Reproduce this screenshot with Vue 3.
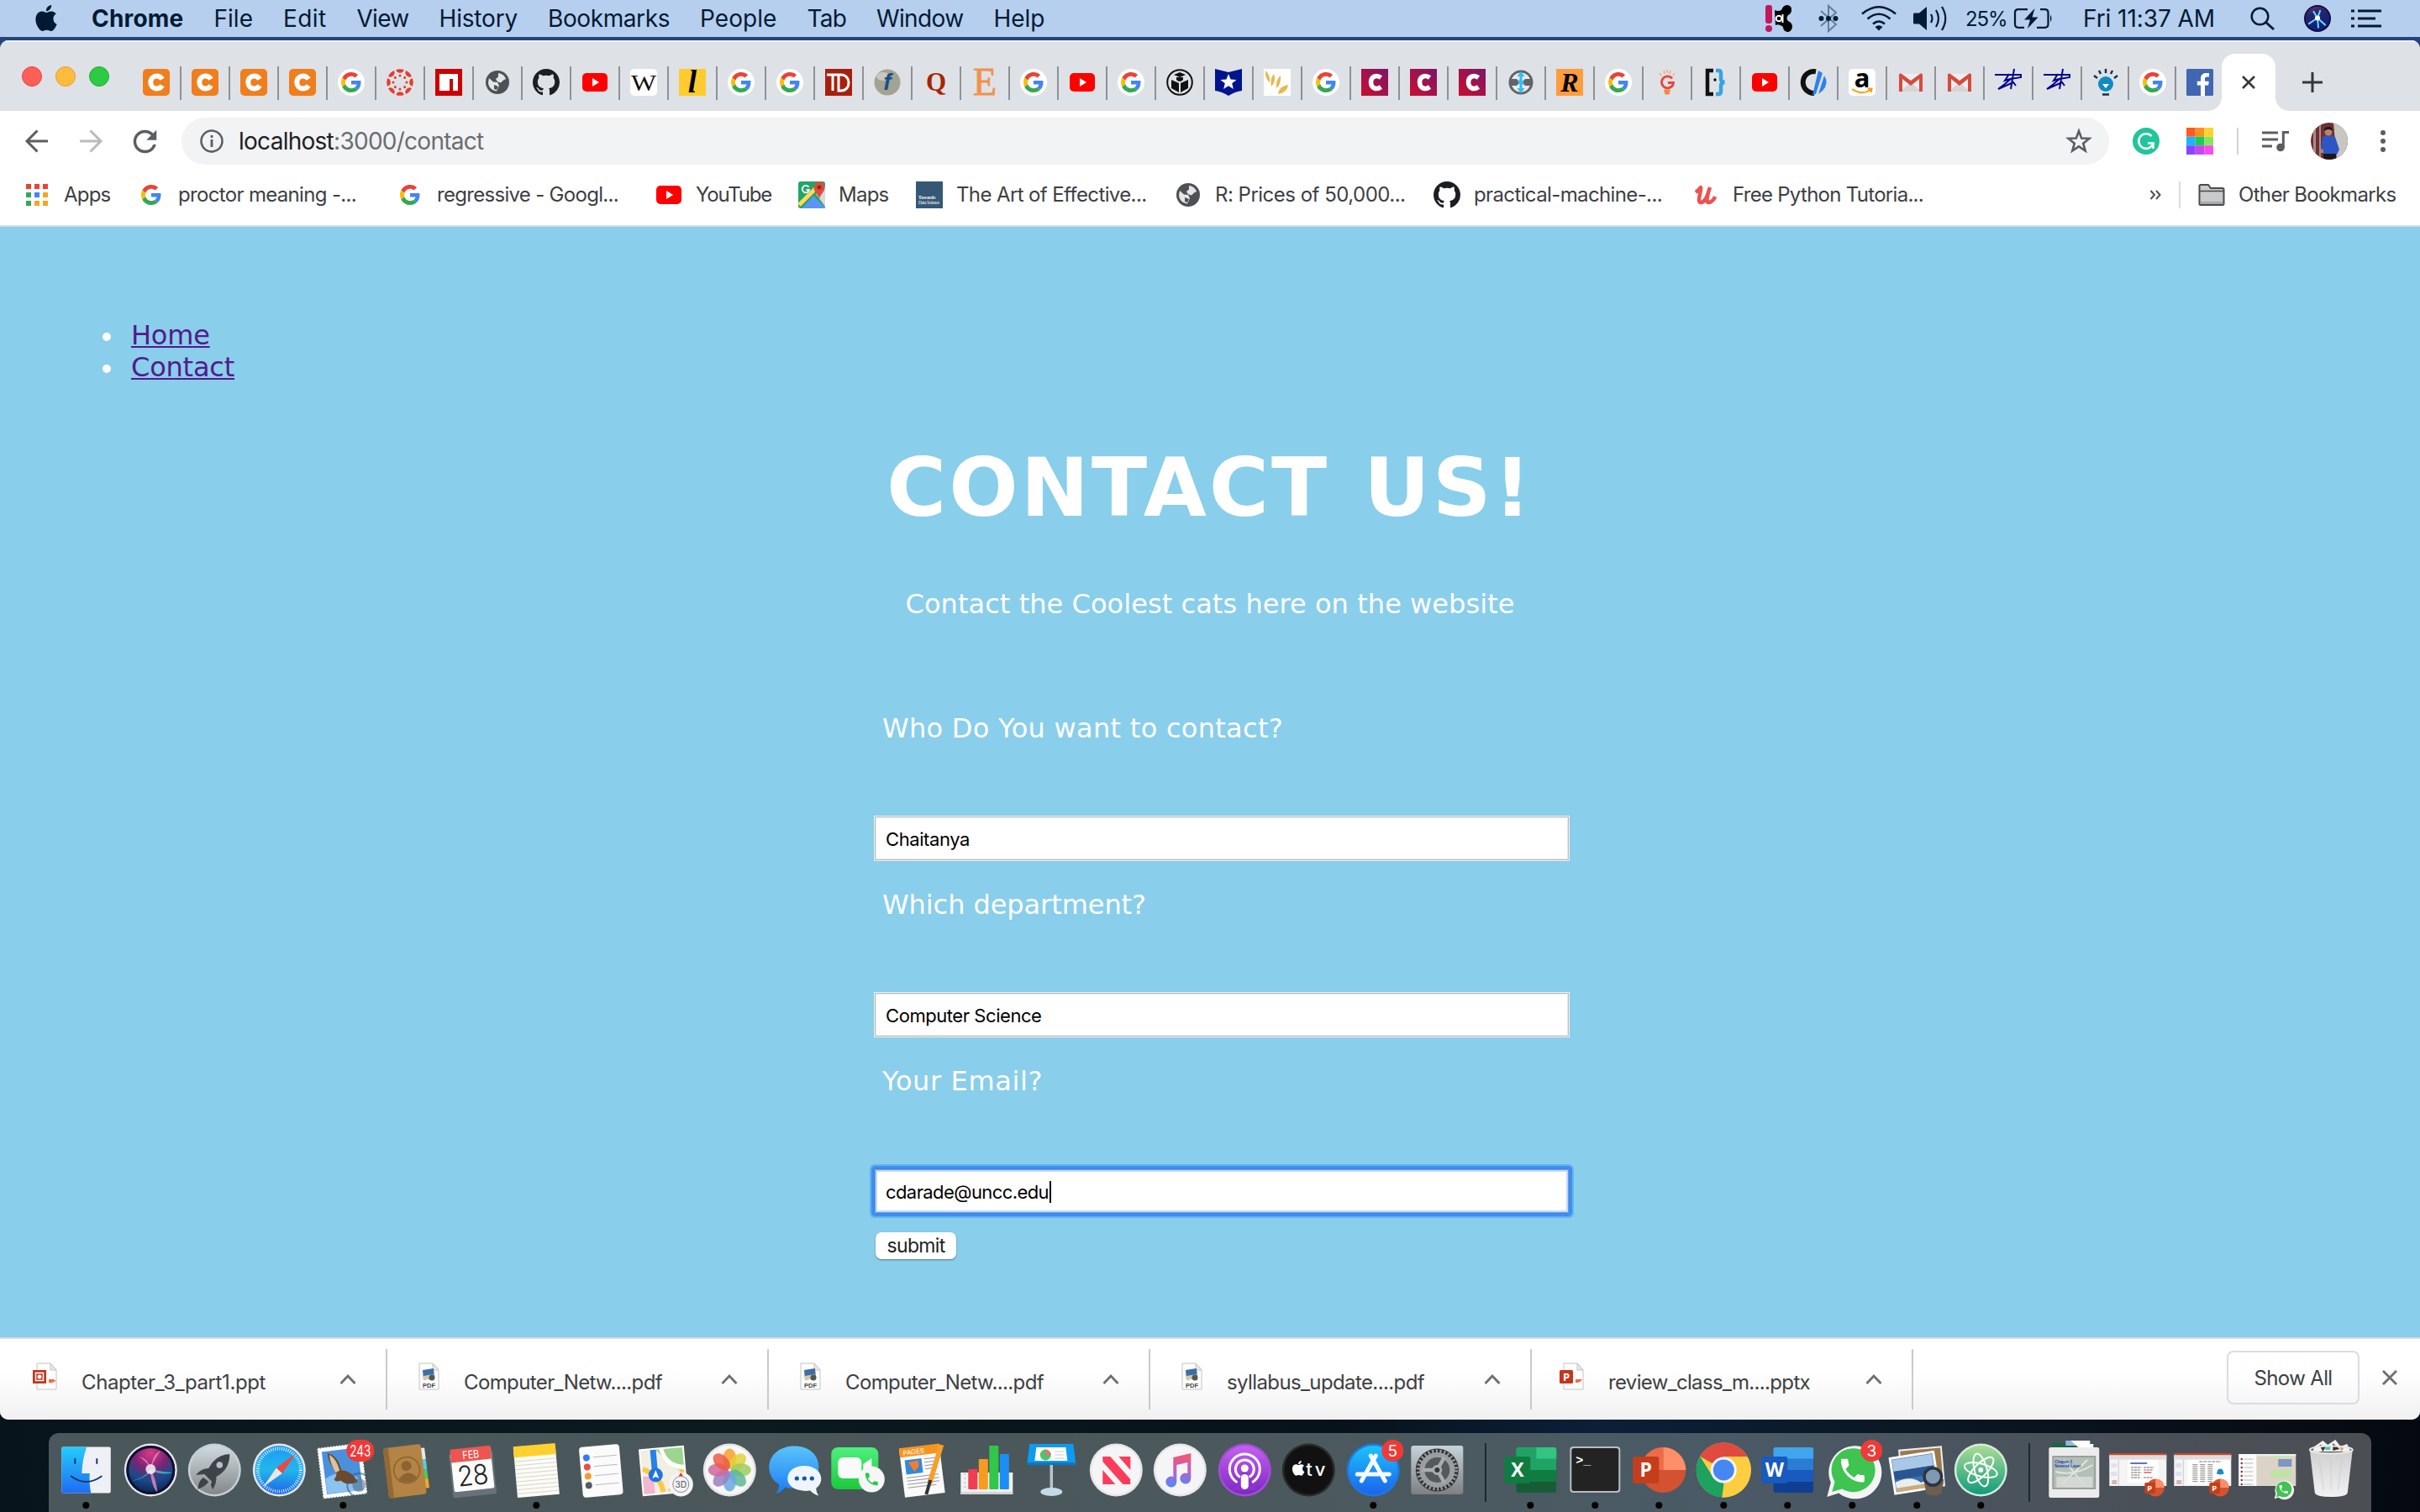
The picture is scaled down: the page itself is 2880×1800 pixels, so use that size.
<script setup>
// Stretches or tightens letter-spacing so a label occupies the given width
const vFit = {
  mounted(el, { value }) {
    const natural = el.getBoundingClientRect().width
    el.style.letterSpacing = (value - natural) / el.textContent.length + 'px'
  }
}

const menus = [
  ['Chrome', 109.5], ['File', 46.5], ['Edit', 51.5], ['View', 62], ['History', 93.5], ['Bookmarks', 145],
  ['People', 91.5], ['Tab', 46.5], ['Window', 103.5], ['Help', 61]
]

const gPaths = '<path fill="#ea4335" d="M24 9.500c3.540 0 6.710 1.220 9.210 3.600l6.850-6.850C35.900 2.380 30.470 0 24 0 14.620 0 6.510 5.380 2.560 13.220l7.980 6.190C12.430 13.720 17.740 9.500 24 9.500z"/><path fill="#4285f4" d="M46.980 24.550c0-1.570-.150-3.090-.380-4.550H24v9.020h12.940c-.580 2.960-2.260 5.480-4.780 7.180l7.730 6c4.510-4.180 7.090-10.360 7.090-17.650z"/><path fill="#fbbc05" d="M10.530 28.590c-.480-1.450-.760-2.990-.760-4.590s.270-3.140.760-4.590l-7.980-6.190C.920 16.460 0 20.120 0 24c0 3.880.920 7.540 2.560 10.780l7.970-6.190z"/><path fill="#34a853" d="M24 48c6.480 0 11.930-2.130 15.890-5.810l-7.730-6c-2.150 1.450-4.920 2.300-8.160 2.300-6.260 0-11.570-4.220-13.470-9.910l-7.980 6.190C6.510 42.620 14.620 48 24 48z"/>'
const github = '<path transform="scale(2)" fill="#1b1f23" d="M8 0C3.58 0 0 3.58 0 8c0 3.54 2.29 6.53 5.47 7.59.4.07.55-.17.55-.38 0-.19-.01-.82-.01-1.49-2.01.37-2.53-.49-2.69-.94-.09-.23-.48-.94-.82-1.13-.28-.15-.68-.52-.01-.53.63-.01 1.08.58 1.23.82.72 1.21 1.87.87 2.33.66.07-.52.28-.87.51-1.07-1.78-.2-3.64-.89-3.64-3.95 0-.87.31-1.59.82-2.15-.08-.2-.36-1.02.08-2.12 0 0 .67-.21 2.2.82.64-.18 1.32-.27 2-.27s1.36.09 2 .27c1.53-1.04 2.2-.82 2.2-.82.44 1.1.16 1.92.08 2.12.51.56.82 1.27.82 2.15 0 3.07-1.87 3.75-3.65 3.95.29.25.54.73.54 1.48 0 1.07-.01 1.93-.01 2.2 0 .21.15.46.55.38A8.01 8.01 0 0 0 16 8c0-4.42-3.58-8-8-8z"/>'
const phone = 'M6.62 10.79c1.44 2.83 3.76 5.14 6.59 6.59l2.2-2.2c.27-.27.67-.36 1.02-.24 1.12.37 2.33.57 3.57.57.55 0 1 .45 1 1V20c0 .55-.45 1-1 1-9.39 0-17-7.61-17-17 0-.55.45-1 1-1h3.500c.55 0 1 .45 1 1 0 1.25.2 2.45.57 3.57.11.35.03.74-.25 1.020z'
const apple = 'M12.152 6.896c-.948 0-2.415-1.078-3.96-1.04-2.04.027-3.91 1.183-4.961 3.014-2.117 3.675-.546 9.103 1.519 12.09 1.013 1.454 2.208 3.09 3.792 3.039 1.52-.065 2.09-.987 3.935-.987 1.831 0 2.35.987 3.96.948 1.637-.026 2.676-1.48 3.676-2.948 1.156-1.688 1.636-3.325 1.662-3.415-.039-.013-3.182-1.221-3.22-4.857-.026-3.04 2.48-4.494 2.597-4.559-1.429-2.09-3.623-2.324-4.39-2.376-2-.156-3.675 1.09-4.61 1.09zM15.53 3.83c.843-1.012 1.4-2.427 1.245-3.83-1.207.052-2.662.805-3.532 1.818-.78.896-1.454 2.338-1.273 3.714 1.338.104 2.715-.688 3.559-1.701'
const range = (n) => Array.from({ length: n }, (_, i) => i)

const fav = {
  chegg: '<rect width="32" height="32" rx="5" fill="#f07e1d"/><path d="M24.500 12.200A7.500 7.500 0 0 0 18 8.500c-4 0-7.200 3-7.200 7.500s3.200 7.500 7.200 7.500a7.500 7.500 0 0 0 6.500-3.700" transform="translate(-1.500 0)" fill="none" stroke="#fff" stroke-width="6"/>',
  google: `<circle cx="16" cy="16" r="16" fill="#fff"/><g transform="translate(4 4) scale(.5)">${gPaths}</g>`,
  gplain: `<g transform="translate(4 4) scale(.5)">${gPaths}</g>`,
  canvas: '<g fill="#e03e2d">' + range(8).map(i => `<g transform="rotate(${i * 45} 16 16)"><path d="M11.300 1q4.700-1.700 9.400 0a4.800 4.800 0 0 1-9.400 0"/><circle cx="16" cy="8" r="1.500"/></g>`).join('') + '</g>',
  npm: '<rect width="32" height="32" fill="#cb0000"/><path fill="#fff" d="M5 6h22v20h-6V12h-4v14H5z"/>',
  globe: '<circle cx="16" cy="16" r="14" fill="#4d5156"/><path fill="#fff" fill-opacity=".85" d="M17 5c4 .400 8 3.500 9 7l-3 1.500-3 3-4-1.200-2-3.300 3-2.500zM6 11l5 4.500 5 .5 2 4-3 6.500C9 26 5 21 5 16z"/><path fill="#4d5156" d="m12 19 5 2-2 4-3-1z"/>',
  github,
  youtube: '<rect x="1" y="5" width="30" height="22" rx="5" fill="#f00"/><path fill="#fff" d="M13 11v10l8-5z"/>',
  wiki: '<rect width="32" height="32" rx="5" fill="#fff"/><text x="16" y="26" font-size="28" text-anchor="middle" textLength="30" lengthAdjust="spacingAndGlyphs" font-family="Liberation Serif, serif" fill="#111">W</text>',
  ell: '<rect width="32" height="32" fill="#ffcb2f"/><text x="16" y="28" font-size="37" font-weight="bold" font-style="italic" text-anchor="middle" font-family="Liberation Serif, serif">l</text>',
  td: '<rect width="32" height="32" fill="#a8200d"/><path fill="none" stroke="#fff" stroke-width="3" d="M2 7h17c12 0 12 19 0 19h-3V7M9 7v19"/>',
  fsharp: '<circle cx="16" cy="16" r="15.500" fill="#a4a393"/><ellipse cx="11" cy="9" rx="8" ry="5" fill="#c9c8bb"/><text x="16" y="25" font-size="28" font-weight="bold" font-style="italic" text-anchor="middle" font-family="Liberation Sans, sans-serif" fill="#14508c">f</text>',
  quora: '<text x="16" y="26" font-size="31" font-weight="bold" text-anchor="middle" font-family="Liberation Serif, serif" fill="#a82400">Q</text>',
  etsy: '<text x="16" y="31" font-size="46" text-anchor="middle" font-family="Liberation Serif, serif" fill="#f0924e" stroke="#f0924e" stroke-width=".8">E</text>',
  book: '<circle cx="16" cy="16" r="14.800" fill="none" stroke="#111" stroke-width="2"/><path fill="#111" d="m6 13 9 4v11l-9-5zM26 13l-9 4v11l9-5zM9 7l7-3 7 3-7 3zM12 10h8v3q-4 4-8 0z"/>',
  badge: '<path fill="#00148c" d="m0 0 16 4L32 0v26q-8 1-16 6-8-5-16-6z"/><path fill="#fff" d="m16 6 2.600 6.500 6.900.4-5.300 4.400 1.700 6.700-5.900-3.700-5.900 3.700 1.700-6.700-5.300-4.400 6.900-.4z"/>',
  leaf: '<rect width="32" height="32" fill="#fff"/><g fill="#e8b84a"><path d="M2 2q6 6 5 14-6-5-5-14M12 6q3 8-3 15-2-9 3-15M20 8q1 10-5 15-1-10 5-15M29 19q-1 9-12 11 1-9 12-11"/></g>',
  crimson: '<linearGradient id="cr" x1="0" y1="1" x2="1" y2="0"><stop stop-color="#c8102e"/><stop offset="1" stop-color="#7d1568"/></linearGradient><rect width="32" height="32" fill="url(#cr)"/><path d="M23.500 10.500C18 6.500 11.500 9 11.500 16s6.500 9.500 12 5.500" fill="none" stroke="#fff" stroke-width="5.500"/>',
  compass: '<circle cx="16" cy="16" r="13" fill="#e8eaed" stroke="#616569" stroke-width="3"/><path fill="#616569" d="M3 12h8l4 4-4 4H3zM29 12h-8l-4 4 4 4h8z"/><path fill="#2fc0f5" d="m16 3 4.500 6h-3v4.500L20 17l-2.500 2v4h3L16 29l-4.500-6h3v-4.500L12 15l2.500-2V9h-3z"/>',
  r: '<rect width="32" height="32" fill="#ff9c3c"/><text x="16" y="27" font-size="32" font-weight="bold" font-style="italic" text-anchor="middle" font-family="Liberation Serif, serif">R</text>',
  gbulb: '<path d="M7 5l2 3M12 2l1 4M16 1v4M20 2l-1 4M25 5l-2 3" stroke="#f0a35c" stroke-width="1.200"/><path d="M22 11.500a7 7 0 1 0 1.500 5H17" fill="none" stroke="#e8453c" stroke-width="2.800"/><path d="M12 24.500h8l-1.500 6h-5z" fill="#f08a3c"/>',
  braces: '<path d="M13 2H6v28h7" fill="none" stroke="#111" stroke-width="4.500"/><path d="M16 2h3q3 0 3 3v7q0 3 4 4-4 1-4 4v7q0 3-3 3h-3" fill="none" stroke="#35a4df" stroke-width="4.500"/><circle cx="15" cy="13" r="1.700"/>',
  cd: '<path d="M19 3.200A13 13 0 1 0 17 29" fill="none" stroke="#111" stroke-width="6"/><path fill="#2f80ed" d="M22 2l5 3-8 25-4 1zM29 8q6 9-2 18l-5 4z"/>',
  amazon: '<rect width="32" height="32" rx="5" fill="#fff"/><text x="16" y="22" font-size="31" font-weight="bold" text-anchor="middle" font-family="Noto Sans, sans-serif">a</text><path d="M4 24q12 8 22 1M23 23.500l4.500.2-1 4.300" fill="none" stroke="#f90" stroke-width="2"/>',
  gmail: '<path fill="#eee" d="M3 6h26v21H3z"/><path fill="#d5d5d5" d="m3 27 13-11 13 11z"/><path fill="#d54b3d" d="M2 27V7q0-2 2.500-1.500L16 14l11.500-8.500Q30 5 30 7v20h-4V12l-10 8L6 12v15z"/>',
  scrawl: '<path d="M0 7h31v3l-12 2M23 0l-4 24M17 6l-5 8 6-2M20 11l-8 7-8 6 18-8 3 4" fill="none" stroke="#04048c" stroke-width="2"/>',
  idea: '<circle cx="16" cy="18" r="9" fill="#0f8bc4"/><path fill="#fff" d="M12 18h8l-4 5z"/><path d="M16 0v5M8 2l2 4M24 2l-2 4M2 8l4 3M30 8l-4 3M12 30.500h8" stroke="#14304a" stroke-width="2.400"/>',
  facebook: '<rect width="32" height="32" rx="1.500" fill="#4267b2"/><path fill="#fff" d="M22 32V19.600h4.200l.6-4.800H22v-3c0-1.400.4-2.400 2.400-2.400H27V5.100C26.500 5 25 4.900 23.300 4.900c-3.700 0-6.300 2.300-6.300 6.400v3.500h-4.200v4.800H17V32z"/>',
  apps: range(9).map(i => `<rect x="${3 + (i % 3) * 10}" y="${3 + Math.floor(i / 3) * 10}" width="6" height="6" fill="${['#ea4335', '#ea4335', '#ea4335', '#34a853', '#4285f4', '#f5a623', '#34a853', '#f5a623', '#f5a623'][i]}"/>`).join(''),
  maps: '<rect width="32" height="32" rx="3" fill="#23a566"/><path fill="#5b95f5" d="M4 32 18 17l14 14v1z"/><path fill="#d8dade" d="m21 15 11-9v24z"/><path d="M1 28 21 8" stroke="#ffd85c" stroke-width="5"/><path d="M12.500 6.800a4.200 4.200 0 1 0 .6 3.200H9.500" fill="none" stroke="#fff" stroke-width="1.800"/><path fill="#e04a3f" d="M25 21c-1-6-6.500-8-6.500-14a6.500 6.500 0 0 1 13 0c0 6-5.500 8-6.500 14"/><circle cx="25" cy="7" r="2.500" fill="#8c2a22"/>',
  tds: '<rect width="32" height="32" fill="#355876"/><text x="3" y="21" font-size="5.500" font-weight="bold" font-family="Liberation Serif, serif" fill="#fff">Towards</text><text x="3" y="27" font-size="5.500" textLength="25" font-family="Liberation Serif, serif" fill="#fff">Data Science</text>',
  udemy: '<path d="M4 13q4-3 6-6c1 4-5 18 0 18 5 0 8-8 9-12-1 5-3 12 0 12 4 0 7-4 8-7M19 13l2-6" fill="none" stroke="#ec5252" stroke-width="4.500" stroke-linejoin="round"/>'
}

const tabs = ['chegg', 'chegg', 'chegg', 'chegg', 'google', 'canvas', 'npm', 'globe', 'github', 'youtube', 'wiki', 'ell', 'google', 'google',
  'td', 'fsharp', 'quora', 'etsy', 'google', 'youtube', 'google', 'book', 'badge', 'leaf', 'google', 'crimson', 'crimson', 'crimson',
  'compass', 'r', 'google', 'gbulb', 'braces', 'youtube', 'cd', 'amazon', 'gmail', 'gmail', 'scrawl', 'scrawl', 'idea', 'google', 'facebook']

const bookmarks = [
  { icon: 'apps', text: 'Apps', slot: 56, fit: 55.5 },
  { icon: 'gplain', text: 'proctor meaning -...', slot: 228, fit: 212 },
  { icon: 'gplain', text: 'regressive - Googl...', slot: 228, fit: 216 },
  { icon: 'youtube', text: 'YouTube', slot: 90, fit: 90 },
  { icon: 'maps', text: 'Maps', slot: 60, fit: 59.5 },
  { icon: 'tds', text: 'The Art of Effective...', slot: 228, fit: 226.5 },
  { icon: 'globe', text: 'R: Prices of 50,000...', slot: 228, fit: 226.5 },
  { icon: 'github', text: 'practical-machine-...', slot: 228, fit: 224 },
  { icon: 'udemy', text: 'Free Python Tutoria...', slot: 228, fit: 227 }
]

const sheet = '<path fill="#fdfdfd" stroke="#c4c4c4" d="M6 1h16l7 8v23H6z"/><path fill="#e9e9e9" stroke="#c4c4c4" d="M22 1v8h7z"/>'
const fileIcon = {
  ppt: sheet + '<path fill="#f28b6e" d="M20 11v10h9a8 8 0 0 1-9 3z"/><rect x="1" y="9" width="16" height="16" fill="#c5351d"/><path d="M4.500 12.500h9v9h-9z" fill="none" stroke="#fff" stroke-width="1.500"/><circle cx="9" cy="17" r="2.500" fill="#fff"/><path fill="#ef6b4c" d="M20 11v9h7a8 8 0 0 1-7 4z"/>',
  pdf: sheet + '<path fill="#3d6ea8" d="m10 9 13-2 1 11-13 3z"/><path fill="#d9c9a4" d="m11 16 12-2 1 4-13 3z"/><circle cx="21" cy="18" r="3.500" fill="#555"/><text x="17.500" y="29.500" font-size="7.500" font-weight="bold" text-anchor="middle" font-family="Liberation Sans, sans-serif" fill="#444">PDF</text>',
  pptx: sheet + '<path fill="#ef6b4c" d="M20 11v9h8a8 8 0 0 1-8 4z"/><rect x="1" y="9" width="16" height="16" rx="1.500" fill="#c5351d"/><text x="9" y="21.500" font-size="13" font-weight="bold" text-anchor="middle" font-family="Open Sans, sans-serif" fill="#fff">P</text>'
}
const downloads = [
  { icon: 'ppt', text: 'Chapter_3_part1.ppt', fit: 219 },
  { icon: 'pdf', text: 'Computer_Netw....pdf', fit: 236 },
  { icon: 'pdf', text: 'Computer_Netw....pdf', fit: 236 },
  { icon: 'pdf', text: 'syllabus_update....pdf', fit: 235 },
  { icon: 'pptx', text: 'review_class_m....pptx', fit: 240 }
]

const fields = [
  { label: 'Who Do You want to contact?', fit: 477, value: 'Chaitanya', vfit: 100 },
  { label: 'Which department?', fit: 314, value: 'Computer Science', vfit: 185.5 },
  { label: 'Your Email?', fit: 191, value: 'cdarade@uncc.edu', vfit: 194, focus: true }
]

const disc = (fill, ring = '#e6e6ea') => `<circle cx="38" cy="44" r="31.500" fill="${ring}"/><circle cx="38" cy="44" r="29" fill="${fill}"/>`
const badgeOf = (t) => `<rect x="${t.length > 1 ? 42 : 48}" y="8" width="${t.length > 1 ? 33 : 26}" height="26" rx="13" fill="#f03a37"/><text x="${t.length > 1 ? 58.5 : 61}" y="27.500" font-size="19" text-anchor="middle"${t.length > 1 ? ' textLength="25" lengthAdjust="spacingAndGlyphs"' : ''} font-family="Inter, sans-serif" fill="#fff">${t}</text>`
const office = (c1, c2, c3, c4, tile, letter) => `<clipPath id="of${letter}"><rect x="21" y="17" width="48" height="54" rx="3"/></clipPath><g clip-path="url(#of${letter})"><rect x="21" y="17" width="48" height="54" fill="${c4}"/><rect x="21" y="17" width="48" height="41" fill="${c3}"/><rect x="21" y="17" width="48" height="27" fill="${c2}"/><rect x="21" y="17" width="48" height="13.500" fill="${c1}"/></g><rect x="7" y="28" width="31" height="32" rx="2.500" fill="${tile}"/><text x="22.500" y="52" font-size="23" font-weight="bold" text-anchor="middle" font-family="Open Sans, sans-serif" fill="#fff">${letter}</text>`
const pptMini = '<circle cx="46" cy="65" r="10.500" fill="#d35230"/><path fill="#ff8f6b" d="M46 65V54.500A10.500 10.500 0 0 1 56.500 65z"/><rect x="33" y="59" width="12.500" height="13" rx="1.500" fill="#c43e1c"/><text x="39" y="69" font-size="9.500" font-weight="bold" text-anchor="middle" font-family="Open Sans, sans-serif" fill="#fff">P</text>'
const slideMini = '<rect x="4" y="25" width="68" height="38" fill="#f4f4f4"/><rect x="4" y="24" width="68" height="2.500" fill="#c8472b"/><rect x="4" y="26.500" width="68" height="5" fill="#ddd"/><path d="M15 32v31" stroke="#ccc"/><rect x="6" y="36" width="7" height="5" fill="#dfe0f0"/><rect x="6" y="46" width="7" height="5" fill="#dfe0f0"/><rect x="7" y="56" width="6" height="5" fill="#d8b4b8"/>'
const wa = '<path fill="#f4f4f4" d="M8 76l4.500-17A31.500 31.500 0 1 1 22 71.500z"/><path fill="#3fc351" d="M14 70l3.300-12A26 26 0 1 1 26 66.500z"/>'
const glyphSiri = '<path fill="#2fd3d6" fill-opacity=".75" d="M38 43q-6 10-23 14 15-2 24-12 14 6 25 2-14-1-26-4"/><path fill="#f08ac0" fill-opacity=".8" d="M38 43q7 14 8 27-6-3-9-27M38 43Q35 30 24 28q10 6 14 15M38 43q2-18 12-22-8 10-12 22"/><circle cx="38" cy="43" r="6" fill="#fff" fill-opacity=".8"/>'
const menuSiri = '<linearGradient id="ms" x1="0" y1="0" x2=".3" y2="1"><stop stop-color="#7a2a86"/><stop offset=".35" stop-color="#28246c"/><stop offset="1" stop-color="#101c86"/></linearGradient><circle cx="38" cy="44" r="31.500" fill="#0b1030"/><circle cx="38" cy="44" r="28" fill="url(#ms)"/><path d="M38 43 18 56M38 43l18 16M38 43l-9-15M38 43l6-17M38 43l2 22" stroke="#5fdcf0" stroke-width="4" stroke-linecap="round"/><circle cx="38" cy="43" r="6" fill="#fff"/>'

const dock = {
  finder: '<linearGradient id="fi" x1="0" y1="0" x2="0" y2="1"><stop stop-color="#25cbfb"/><stop offset="1" stop-color="#1f6cf2"/></linearGradient><rect x="9" y="16.500" width="58.500" height="55" rx="2" fill="#eef0f6"/><path fill="url(#fi)" d="M11 16.500h28q-5.500 15-6 31.500h9.500q-1 12 1.500 23.500H11a2 2 0 0 1-2-2v-51a2 2 0 0 1 2-2"/><path d="M20.500 51.500q17.500 13 36 0M25 31v5M51 31v5" fill="none" stroke="#173a63" stroke-width="2" stroke-linecap="round"/>',
  siri: '<radialGradient id="si" cx=".5" cy=".15" r=".95"><stop stop-color="#d93a86"/><stop offset=".35" stop-color="#7c2473"/><stop offset=".6" stop-color="#1a4a8c"/><stop offset="1" stop-color="#0a1230"/></radialGradient>' + disc('url(#si)') + '<circle cx="38" cy="44" r="27.500" fill="none" stroke="#0d1130" stroke-width="3"/>' + glyphSiri,
  rocket: '<linearGradient id="ro" x1="0" y1="0" x2="0" y2="1"><stop stop-color="#cfdbe0"/><stop offset="1" stop-color="#84878a"/></linearGradient>' + disc('url(#ro)', '#c5cfd4') + '<path fill="#3e4347" d="M56 25q-17 1-25 17-9 0-15 8l10-1 9 9q-3 4 1 9 5-8 4-15Q56 44 56 25M25 53q-6 3-7 14 10-4 13-9z"/><circle cx="44" cy="38" r="3.800" fill="#b7c0c5"/>',
  safari: '<linearGradient id="sa" x1="0" y1="0" x2="0" y2="1"><stop stop-color="#1f9bf5"/><stop offset=".5" stop-color="#22b6ea"/><stop offset="1" stop-color="#1d63e8"/></linearGradient>' + disc('url(#sa)') + '<circle cx="38" cy="44" r="25.500" fill="none" stroke="#e8f5ff" stroke-width="4" stroke-dasharray=".9 1.700"/><path fill="#f0473e" d="m58 24-16.500 24-7-6.500z"/><path fill="#e8e8e8" d="m19 64 15.500-22.500 7 6.500z"/>',
  mail: '<g transform="rotate(-7 38 45)"><rect x="13" y="17" width="48" height="56" fill="#4a90dd" stroke="#fff" stroke-width="5"/><rect x="10.500" y="14.500" width="53" height="61" fill="none" stroke="#4c585b" stroke-width="1.500" stroke-dasharray="1.500 2"/><path fill="#8ac2f0" d="M16 52q20-12 42 6v12H16z"/><path fill="#6d4a2a" d="M22 22q12 4 14 22 12 2 18 16-14 4-20-4-6 2-8-2 4-4 4-8-8-10-8-24"/><path fill="#d9c3a0" d="M24 24q8 6 10 20l-5 2q-5-10-5-22"/></g><circle cx="57" cy="62" r="14" fill="none" stroke="#3c5873" stroke-opacity=".6" stroke-width="2"/><circle cx="57" cy="62" r="8" fill="#3c5873" fill-opacity=".5"/>' + badgeOf('243'),
  contacts: '<g transform="rotate(-7 38 45)"><path fill="#e8e8e8" d="M55 20h6v14h-6z"/><path fill="#5cc8e8" d="M55 34h6v12h-6z"/><path fill="#4cca5c" d="M55 46h6v11h-6z"/><path fill="#f5a82c" d="M55 57h6v11h-6z"/><rect x="12" y="15" width="45" height="60" rx="3" fill="#b38444"/><path fill="#946a34" d="M12 18a3 3 0 0 1 3-3h3v60h-3a3 3 0 0 1-3-3z"/><circle cx="37" cy="44" r="15.500" fill="none" stroke="#8b6430" stroke-width="1.500"/><circle cx="37" cy="39" r="6" fill="#8b6430"/><path fill="#8b6430" d="M26 54q11-13 22 0-10 9-22 0"/></g>',
  calendar: '<g transform="rotate(-6 38 45)"><rect x="12" y="22" width="52" height="53" rx="2" fill="#69727a"/><rect x="14" y="18" width="48" height="50" rx="2" fill="#fbfbfb"/><path fill="#ec5550" d="M14 33V17h48v16z"/><text x="38" y="30" font-size="13" text-anchor="middle" textLength="20" lengthAdjust="spacingAndGlyphs" font-family="Inter, sans-serif" fill="#fff">FEB</text><text x="38" y="62" font-size="33" font-weight="300" text-anchor="middle" textLength="37" lengthAdjust="spacingAndGlyphs" font-family="Inter, sans-serif" fill="#222">28</text></g>',
  notes: '<g transform="rotate(-5 38 45)"><rect x="13" y="16" width="50" height="59" fill="#fcfcf5"/><path fill="#ffd12e" d="M13 14h50v13H13z"/>' + range(9).map(i => `<path d="M13 ${32 + i * 4.800}h50" stroke="#ccc" stroke-width=".8"/>`).join('') + '</g>',
  reminders: '<g transform="rotate(-5 38 45)"><rect x="14" y="15" width="48" height="60" rx="4" fill="#fbfbfb"/><path d="M30 28h28M30 39h28M30 50h28M30 61h28" stroke="#bbb"/><circle cx="22" cy="28" r="4" fill="#2f7cf6"/><circle cx="22" cy="39" r="4" fill="#f04a40"/><circle cx="22" cy="50" r="4" fill="#f79a32"/><circle cx="22" cy="61" r="4" fill="#565b66"/></g>',
  maps: '<g transform="rotate(-5 36 45)"><rect x="10" y="18" width="52" height="54" fill="#f3eee2"/><path fill="#9cd68e" d="M28 18h34v30Q46 44 40 32z"/><path fill="#fff" d="M38 18q4 20 24 22v6Q38 44 33 18z"/><path fill="#f2b8cd" d="M10 50h14v22H10z"/><path d="M12 41q20 9 22 29M42 70 60 46" fill="none" stroke="#f8ca45" stroke-width="6"/><path d="M26 18v34" stroke="#2580e8" stroke-width="7"/><rect x="10" y="18" width="52" height="54" fill="none" stroke="#fff" stroke-width="2"/></g><circle cx="27" cy="50" r="8.500" fill="#1e74e0"/><path fill="#fff" d="m27 44 4 10-4-2-4 2z"/><circle cx="57" cy="61" r="14.500" fill="#f5f5f7"/><circle cx="57" cy="61" r="9.500" fill="none" stroke="#888"/><text x="57" y="65" font-size="10.500" text-anchor="middle" font-family="Inter, sans-serif" fill="#555">3D</text><path fill="#e33" d="m57 47 2.500 4h-5z"/>',
  photos: disc('#f7f7f4') + ['#f7a12b', '#e0d23a', '#9fce5a', '#5fb995', '#6aa9e0', '#9b7fc2', '#d0679f', '#ee5b45'].map((c, i) => `<ellipse cx="38" cy="30.500" rx="7.800" ry="12" fill="${c}" fill-opacity=".85" transform="rotate(${i * 45} 38 44)"/>`).join(''),
  messages: '<linearGradient id="me" x1="0" y1="0" x2="0" y2="1"><stop stop-color="#5ac4fb"/><stop offset="1" stop-color="#1b7df5"/></linearGradient><path fill="url(#me)" d="M38 15.500c17 0 29 10 29 25S55 66 38 66q-6 0-11-1.500Q22 71 16 71.500q4-4 4-10Q8 54 8 41c0-15 13-25.500 30-25.500"/><path fill="#eef5fd" d="M50 39c12 0 20 7 20 15.500 0 5-3 9-6 11 0 4 1 6 3 9-5-1-8-4-10-6-14 2-27-4-27-14S39 39 50 39"/><circle cx="41" cy="54" r="2.600" fill="#165a9e"/><circle cx="50" cy="54" r="2.600" fill="#165a9e"/><circle cx="59" cy="54" r="2.600" fill="#165a9e"/>',
  facetime: '<linearGradient id="fa" x1="0" y1="0" x2="0" y2="1"><stop stop-color="#4df07c"/><stop offset="1" stop-color="#1cc93c"/></linearGradient><rect x="6" y="17" width="56" height="50" rx="8" fill="url(#fa)"/><rect x="14" y="29" width="28" height="25" rx="6" fill="#fafafa"/><path fill="#fafafa" d="m44 37 10-7v24l-10-7z"/><circle cx="54" cy="55" r="15.500" fill="#f6f6f6"/><g transform="translate(44 45) scale(.83)"><path fill="#25cb45" d="' + phone + '"/></g>',
  pages: '<g transform="rotate(-7 38 45)"><rect x="13" y="16" width="48" height="58" fill="#fafafa"/><path fill="#f7941e" d="M13 15h48v11H13z"/><text x="17" y="24" font-size="8" font-family="Inter, sans-serif" fill="#fff">PAGES</text><rect x="18" y="30" width="20" height="17" fill="#2f8ad8"/><path fill="#f57c2c" d="m22 33 12-1 0 7-6 6z"/><path d="M41 31h15M41 35h15M41 39h15M41 43h15M18 51h38M18 55h38M18 59h38M18 63h34" stroke="#999"/></g><path d="m60 14-14 46" stroke="#f5a02c" stroke-width="6"/><path d="m47 56-5 17" stroke="#333" stroke-width="4"/>',
  numbers: '<path fill="#f1f1f4" d="M7 47h62v26H7z"/><path d="M12 48v18" stroke="#aaa" stroke-dasharray="2 3"/><rect x="16" y="43" width="11" height="24" rx="1" fill="#f03e50"/><rect x="28.500" y="31" width="11" height="36" rx="1" fill="#f79a22"/><rect x="41" y="15" width="11" height="52" rx="1" fill="#33c648"/><rect x="53.500" y="25" width="11" height="42" rx="1" fill="#1c8ff5"/><path fill="#d5d5da" d="M7 70h62v3H7z"/>',
  keynote: '<path fill="#0c9bf0" d="M12 13h52l3 24H9z"/><path fill="#0a78c8" d="M9 35h58v3H9z"/><path fill="#fff" d="M20 17h35l2 16H18z"/><circle cx="31" cy="26" r="6.500" fill="#4fc36a"/><path fill="#f07070" d="M31 26v-6.500A6.500 6.500 0 0 1 37 26z"/><path d="M42 22h11M42 26h11M42 30h11" stroke="#ccc"/><path d="M38 38v33" stroke="#b9c5cf" stroke-width="3.500"/><ellipse cx="38" cy="70" rx="13" ry="5" fill="#c4dae8"/>',
  news: disc('#f5f5f7') + '<path fill="#fb3c5a" d="M22 28h9l24 27v6h-9L22 34zM41 28h14v16zM22 44v17h15z"/>',
  music: '<linearGradient id="mu" x1="0" y1="0" x2="0" y2="1"><stop stop-color="#fb5566"/><stop offset=".5" stop-color="#c060c8"/><stop offset="1" stop-color="#4b8af8"/></linearGradient>' + disc('#f5f5f8') + '<path fill="url(#mu)" d="m30 29 21-5v30a6.500 6.500 0 1 1-4-6V35l-13 3v20a6.500 6.500 0 1 1-4-6z"/>',
  podcasts: '<linearGradient id="po" x1="0" y1="0" x2="0" y2="1"><stop stop-color="#c65ff2"/><stop offset="1" stop-color="#7d28c4"/></linearGradient>' + disc('url(#po)', '#a050d0') + '<circle cx="38" cy="43" r="18" fill="none" stroke="#fff" stroke-width="3"/><circle cx="38" cy="43" r="11" fill="none" stroke="#fff" stroke-width="3"/><path fill="#8c33cc" d="m38 43 14 25H24z"/><circle cx="38" cy="42" r="4.500" fill="#fff"/><rect x="33.500" y="49" width="9" height="18" rx="4.500" fill="#fff"/>',
  tv: disc('#111', '#2a2a2a') + `<path fill="#fff" transform="translate(17 33) scale(.74)" d="${apple}"/><text x="46.500" y="51" font-size="22" font-weight="500" text-anchor="middle" textLength="23" font-family="Inter, sans-serif" fill="#fff">tv</text>`,
  appstore: '<linearGradient id="as" x1="0" y1="0" x2="0" y2="1"><stop stop-color="#1cc3fb"/><stop offset="1" stop-color="#1c63ee"/></linearGradient>' + disc('url(#as)', '#1c7ae0') + '<path d="M41 27 24 57M35 27l17 30M19 49h25M50 49h7" stroke="#f5faff" stroke-width="5" stroke-linecap="round"/>' + badgeOf('5'),
  prefs: '<linearGradient id="pr" x1="0" y1="0" x2="0" y2="1"><stop stop-color="#c5d3da"/><stop offset="1" stop-color="#7f7f82"/></linearGradient><rect x="7" y="15" width="62" height="58" rx="3" fill="url(#pr)"/><circle cx="38" cy="44" r="25.500" fill="#26292b"/><circle cx="38" cy="44" r="22.500" fill="none" stroke="#8d9194" stroke-width="4.500" stroke-dasharray="2.600 2.110"/><circle cx="38" cy="44" r="18" fill="#55595c" stroke="#9a9ea1" stroke-width="6"/><path d="M38 44h-17M38 44l8.500-15M38 44l8.500 15" stroke="#a9adb0" stroke-width="4.500"/><circle cx="38" cy="44" r="4.500" fill="#34383b" stroke="#a9adb0" stroke-width="3"/>',
  excel: office('#21a366', '#21a366', '#107c41', '#185c37', '#107c41', 'X') + '<path fill="#33c481" d="M45 17h21a3 3 0 0 1 3 3v10.500H45z"/>',
  terminal: '<rect x="8" y="16" width="60" height="55" rx="4" fill="#b9bcc0"/><rect x="10" y="18" width="56" height="51" rx="3" fill="#232323"/><text x="15" y="37" font-size="15" font-weight="bold" font-family="Liberation Mono, monospace" fill="#fff">&gt;_</text>',
  powerpoint: '<circle cx="43" cy="44" r="27" fill="#d35230"/><path fill="#ff8f6b" d="M43 44V17a27 27 0 0 1 27 27z"/><path fill="#ed6c47" d="M43 17a27 27 0 0 0-27 27h27z"/><rect x="7" y="28" width="31" height="32" rx="2.500" fill="#c43e1c"/><text x="22.500" y="52" font-size="23" font-weight="bold" text-anchor="middle" font-family="Open Sans, sans-serif" fill="#fff">P</text>',
  chrome: '<circle cx="38" cy="44" r="32.500" fill="#ffcd40"/><path fill="#e04a3f" d="M38 44 9.900 27.700A32.500 32.500 0 0 1 66.200 28H38z"/><path fill="#1da25f" d="M9.900 27.700 25 52l13-8v18L36 76.500A32.500 32.500 0 0 1 9.900 27.700"/><path fill="#ffcd40" d="M50 30h17.300A32.500 32.500 0 0 1 36 76.500L51 51z"/><circle cx="38" cy="44" r="15.500" fill="#f5f5f5"/><circle cx="38" cy="44" r="12.500" fill="#4687f4"/>',
  word: office('#41a5ee', '#2b7cd3', '#185abd', '#103f91', '#185abd', 'W'),
  whatsapp: wa + `<g transform="translate(20 26) scale(1.550)"><path fill="#fff" d="${phone}"/></g>` + badgeOf('3'),
  preview: '<g transform="rotate(-5 38 45)"><rect x="19" y="19" width="50" height="46" fill="#9a7a4c" stroke="#eee" stroke-width="2"/></g><g transform="rotate(-9 36 48)"><rect x="9" y="26" width="52" height="42" fill="#3c6fae" stroke="#fff" stroke-width="3"/><path fill="#a9c8e8" d="M11 28h48v14H11z"/><path fill="#2b5590" d="M11 42h48v10H11z"/><path fill="#e9eef0" d="M11 55q20-6 30 5l18-4v8H11z"/><path fill="#c9ac7c" d="M11 62h36v5H11z"/></g><path fill="#6d5f4f" d="M46 55h24l-3 17q-9 5-18 0z"/><circle cx="57" cy="52" r="12" fill="#2c3440"/><circle cx="57" cy="52" r="8.500" fill="#7f99b0"/>',
  atom: '<linearGradient id="at" x1="0" y1="0" x2="0" y2="1"><stop stop-color="#a9dd95"/><stop offset="1" stop-color="#129b7a"/></linearGradient>' + disc('url(#at)', '#d4ecdc') + range(3).map(i => `<ellipse cx="38" cy="44" rx="7.500" ry="20" fill="none" stroke="#fff" stroke-width="2" transform="rotate(${i * 60 - 15} 38 44)"/>`).join('') + '<circle cx="38" cy="44" r="3" fill="#fff"/>',
  stack: '<path fill="#156a3c" d="M12 12h50v6H12z"/><path fill="#9ab4dc" d="M28 9h16v6H28z"/><path fill="#fff" d="M34 9h23v4h4v5H44z"/><rect x="8" y="17" width="60" height="60" rx="2.500" fill="#ececec"/><rect x="12" y="27" width="52" height="40" fill="#9aa09d"/><rect x="14" y="29" width="48" height="36" fill="#b3c0b5"/><path d="m22 62 32-30M26 32l24 30M16 46q22 6 44-8" fill="none" stroke="#dfe5e0" stroke-width="2"/><path fill="#dcdcdc" fill-opacity=".8" d="M17 52h43v13H17z"/><text x="15" y="36" font-size="4.500" font-weight="bold" font-family="Liberation Sans, sans-serif" fill="#2a3cae">Chapter 3</text><text x="15" y="41" font-size="4.500" font-weight="bold" font-family="Liberation Sans, sans-serif" fill="#2a3cae">Network Layer</text>',
  slideA: slideMini + '<rect x="26" y="32" width="36" height="27" fill="#fff"/><path d="M29 36h20" stroke="#3b3bc0" stroke-width="1.500"/><path d="M30 41h12M30 44h11M30 47h12M30 50h10M30 53h11M45 41h12M45 44h11M45 53h11" stroke="#666" stroke-width="1.200" stroke-dasharray="3 .7"/><path d="M45 47h9" stroke="#d33" stroke-width="1.200"/><g transform="translate(13)">' + pptMini + '</g>',
  slideB: slideMini + '<rect x="20" y="32" width="50" height="29" fill="#fff"/><path d="M29 37v22M38 37v22M47 37v22" stroke="#999" stroke-width="6" stroke-dasharray="1.200 1.300"/><path d="M34 34h26" stroke="#777" stroke-dasharray="4 1"/><circle cx="59" cy="46" r="3.500" fill="#1c8ac8"/><path d="M55 47.500h8" stroke="#1c8ac8" stroke-width="3"/><g transform="translate(13)">' + pptMini + '</g>',
  chat: '<rect x="4" y="25" width="68" height="38" fill="#dcd3c8"/><rect x="4" y="25" width="21" height="38" fill="#fafafa"/><rect x="25" y="25" width="47" height="2.500" fill="#eee"/>' + range(7).map(i => `<circle cx="7.500" cy="${31 + i * 5}" r="1.300" fill="#744"/><path d="M10 ${31 + i * 5}h11" stroke="#bbb"/>`).join('') + '<rect x="42" y="44" width="25" height="9" fill="#bfe3a4"/><rect x="51" y="31" width="16" height="9" fill="#7f96c0"/><path fill="#c9e7b2" d="M42 27h25v3H42z"/><g transform="translate(43.500 51) scale(.360)">' + wa + `<g transform="translate(20 26) scale(1.550)"><path fill="#fff" d="${phone}"/></g></g>`,
  trash: '<linearGradient id="tr" x1="0" y1="0" x2="0" y2="1"><stop stop-color="#cfcfcf"/><stop offset="1" stop-color="#f2f2f2"/></linearGradient><path fill="#f2f2f2" d="m18 16 10-7 6 5 9-6 6 8 8-3 4 9H16z"/><path fill="#333" d="m24 14 8 2-4 6zM40 12l8 7-8 2z"/><path fill="#4cb" d="M31 15h6v5h-6z"/><path fill="#e96" d="m48 16 5 2-3 4z"/><path fill="url(#tr)" d="M12.500 20q25 7 51 0l-6 51q-1 5-20 5-18 0-19-5z"/><ellipse cx="38" cy="20" rx="25.500" ry="4.500" fill="none" stroke="#e6e6e6" stroke-width="2"/><path d="m24 30 5 38M51 30l-5 38M38 32v36" stroke="#c9c9c9" stroke-width="2" stroke-opacity=".35"/>'
}
const running = new Set(['finder', 'mail', 'notes', 'appstore', 'excel', 'terminal', 'powerpoint', 'chrome', 'word', 'whatsapp', 'preview', 'atom'])
const dockGroups = [
  ['finder', 'siri', 'rocket', 'safari', 'mail', 'contacts', 'calendar', 'notes', 'reminders', 'maps', 'photos', 'messages', 'facetime', 'pages', 'numbers', 'keynote', 'news', 'music', 'podcasts', 'tv', 'appstore', 'prefs'],
  ['excel', 'terminal', 'powerpoint', 'chrome', 'word', 'whatsapp', 'preview', 'atom'],
  ['stack', 'slideA', 'slideB', 'chat', 'trash']
]
</script>

<template>
  <div class="desktop">
    <header class="menubar">
      <svg class="apple" viewBox="2 0 20 24"><path fill="#011a33" :d="apple" /></svg>
      <nav class="menus">
        <span v-for="m in menus" :key="m[0]" class="menu" :style="{ width: m[1] + 'px' }"><span v-fit="m[1]">{{ m[0] }}</span></span>
      </nav>
      <div class="status">
        <svg class="s-avast" viewBox="0 0 32 32"><rect x="0" y="0" width="8" height="22" rx="3" fill="#c2185b" /><circle cx="4" cy="28" r="4" fill="#c2185b" /><path d="M11 6q4 2 8 0 2-6 7-6 6 1 5 7-1 4-4 5-3 4 0 7 5 2 5 7-1 6-6 6-5-1-5-6-5-4-9-2z" /><circle cx="16" cy="16" r="3.300" fill="none" stroke="#fff" stroke-width="2" /><path d="M20.500 11v10" stroke="#fff" stroke-width="2" /></svg>
        <svg class="s-bt" viewBox="0 0 24 32"><path d="m3 7 18 16-9 8V1l9 8L3 25" fill="none" stroke="#011a33" stroke-opacity=".45" stroke-width="2" /><g fill="#011a33"><circle cx="3.500" cy="16" r="3" /><circle cx="12" cy="16" r="3" /><circle cx="20.500" cy="16" r="3" /></g></svg>
        <svg class="s-wifi" viewBox="0 0 42 30"><g fill="none" stroke="#011a33" stroke-width="2.600"><path d="M1 9.500q20-16.500 40 0" /><path d="M7.500 15.500q13.500-11.500 27 0" /><path d="M14 21.500q7-6 14 0" /></g><path fill="#011a33" d="M16.500 25q4.500-3.500 9 0L21 29.500z" /></svg>
        <svg class="s-vol" viewBox="0 0 44 30"><path fill="#011a33" d="M1 10q0-1.500 1.500-1.500H8L17 1v28l-9-7.500H2.500Q1 21.500 1 20z" /><g fill="none" stroke="#011a33" stroke-width="2.200"><path d="M22 10q3 5 0 10M28 5q6 10 0 20M35 1q8.500 14 0 28" /></g></svg>
        <span class="pct"><span v-fit="49.500">25%</span></span>
        <svg class="s-bat" viewBox="0 0 46 24"><g fill="none" stroke="#011a33" stroke-width="2.200"><path d="M16 1.200H5q-4 0-4 4v13.600q0 4 4 4h7M27 22.800h9.500q4 0 4-4V5.200q0-4-4-4H31" /></g><path fill="#011a33" d="M24.500 0 12 13.500h7L16 24l12.500-13.500h-7zM43 7.500q3 4.500 0 9z" /></svg>
        <span class="clock"><span v-fit="157">Fri 11:37 AM</span></span>
        <svg class="s-search" viewBox="0 0 30 28"><circle cx="11.500" cy="11.500" r="9.800" fill="none" stroke="#011a33" stroke-width="2.500" /><path d="m18.500 18.500 9.500 8.500" stroke="#011a33" stroke-width="3" /></svg>
        <svg class="s-siri" viewBox="6.500 12.500 63 63" v-html="menuSiri"></svg>
        <svg class="s-list" viewBox="0 0 36 22"><path d="M0 2h4M0 11h4M0 20h4M8 2h28M8 11h21M8 20h28" stroke="#011a33" stroke-width="3.200" /></svg>
      </div>
    </header>

    <main class="window">
      <div class="tabstrip">
        <div class="lights"><i class="red"></i><i class="amber"></i><i class="green"></i></div>
        <div class="tabs">
          <div v-for="(t, i) in tabs" :key="i" class="tab" :class="{ tight: i > 39, last: i === 42 }"><svg viewBox="0 0 32 32" v-html="fav[t]"></svg></div>
        </div>
        <div class="active"><svg viewBox="0 0 16 16"><path d="m1 1 14 14M15 1 1 15" stroke="#35383b" stroke-width="2.600" /></svg></div>
        <svg class="plus" viewBox="0 0 24 24"><path d="M12 0v24M0 12h24" stroke="#35383b" stroke-width="3" /></svg>
      </div>

      <div class="toolbar">
        <svg class="nav" viewBox="0 0 28 28"><path d="M27 14H3M14.500 1.500 2 14l12.500 12.500" fill="none" stroke="#5a5e62" stroke-width="3" /></svg>
        <svg class="nav fwd" viewBox="0 0 28 28"><path d="M1 14h24M13.500 1.500 26 14 13.500 26.500" fill="none" stroke="#b9bbbe" stroke-width="3" /></svg>
        <svg class="nav reload" viewBox="3 3 18 18"><path fill="#5a5e62" d="M17.650 6.350A7.958 7.958 0 0 0 12 4c-4.420 0-7.990 3.580-7.990 8s3.570 8 7.990 8c3.730 0 6.840-2.550 7.730-6h-2.080A5.990 5.990 0 0 1 12 18c-3.310 0-6-2.690-6-6s2.690-6 6-6c1.660 0 3.140.69 4.220 1.780L13 11h7V4l-2.350 2.350z" /></svg>
        <div class="omnibox">
          <svg class="info" viewBox="0 0 28 28"><circle cx="14" cy="14" r="12.500" fill="none" stroke="#5a5e62" stroke-width="2.500" /><path d="M14 12v9M14 7v3" stroke="#5a5e62" stroke-width="2.800" /></svg>
          <span v-fit="291.500" class="url">localhost<span class="dim">:3000/contact</span></span>
          <svg class="star" viewBox="0 0 30 30"><path d="m15 3 3.200 8.600 9.200.4-7.200 5.700 2.500 8.800L15 21.400l-7.700 5.100 2.500-8.800L2.600 12l9.200-.4z" fill="none" stroke="#5a5e62" stroke-width="2.600" /></svg>
        </div>
        <svg class="ext" viewBox="0 0 32 32"><circle cx="16" cy="16" r="16" fill="#20c59b" /><path d="M22.500 10A8.800 8.800 0 1 0 24.500 18.500H18M24.500 17.500V25" fill="none" stroke="#fff" stroke-width="2.600" /></svg>
        <svg class="ext two" viewBox="0 0 3 3"><g><path fill="#ff5a1f" d="M0 0h1v1H0z" /><path fill="#ff8f1f" d="M1 0h1v1H1z" /><path fill="#ffd22e" d="M2 0h1v1H2z" /><path fill="#1cb5fb" d="M0 1h1v1H0z" /><path fill="#1cca5a" d="M1 1h1v1H1z" /><path fill="#85e85a" d="M2 1h1v1H2z" /><path fill="#8a45fb" d="M0 2h1v1H0z" /><path fill="#c845f5" d="M1 2h1v1H1z" /><path fill="#fb4af0" d="M2 2h1v1H2z" /></g></svg>
        <i class="tool-sep"></i>
        <svg class="queue" viewBox="0 0 32 26"><path d="M0 3h19M0 11h19M0 19h12" stroke="#5a5e62" stroke-width="3" /><circle cx="22" cy="20.500" r="4.800" fill="#5a5e62" /><path d="M25.300 21V2.500H32" fill="none" stroke="#5a5e62" stroke-width="3" /></svg>
        <svg class="avatar" viewBox="0 0 44 44"><clipPath id="av"><circle cx="22" cy="22" r="22" /></clipPath><g clip-path="url(#av)"><path fill="#6e3035" d="M0 0h44v44H0z" /><path fill="#c8c6c1" d="M27 0h17v44H31z" /><path fill="#a88d88" d="M3 0h3v44H3zM10 0h2v44h-2z" /><path fill="#2e55c4" d="M14 17q7-4 15 0l5 15-3 6H15l-3-6z" /><path fill="#b98464" d="m11 31 4 1v4h-4z" /><circle cx="21" cy="11" r="4.500" fill="#b98464" /><path fill="#1c1718" d="M16 10q0-5 5-5t5 5q-5-4-10 0M15 37h15v7H15z" /></g></svg>
        <svg class="dots" viewBox="0 0 8 28"><g fill="#5a5e62"><circle cx="4" cy="4" r="3" /><circle cx="4" cy="14" r="3" /><circle cx="4" cy="24" r="3" /></g></svg>
      </div>

      <div class="bookmarks">
        <div v-for="b in bookmarks" :key="b.text" class="bm">
          <svg viewBox="0 0 32 32" v-html="fav[b.icon]"></svg>
          <span class="bm-slot" :style="{ width: b.slot + 'px' }"><span v-fit="b.fit">{{ b.text }}</span></span>
        </div>
        <svg class="more" viewBox="0 0 14 12"><path d="m1.500 1 4.500 5-4.500 5M8 1l4.500 5L8 11" fill="none" stroke="#4d5156" stroke-width="2" /></svg>
        <i class="bm-sep"></i>
        <svg class="folder" viewBox="0 0 32 26"><path d="M1.500 24V2.500Q1.500 1 3 1h9l3 4h14q1.500 0 1.500 1.500V24q0 1-1.500 1H3q-1.500 0-1.500-1" fill="#c9cacb" stroke="#47494c" stroke-width="2" /><path d="M2 8.500h28" stroke="#47494c" stroke-width="1.500" /><path d="M3 22.500h26" stroke="#a8a9ab" stroke-width="3" /></svg>
        <span class="other"><span v-fit="187.500">Other Bookmarks</span></span>
      </div>

      <section class="page">
        <ul class="links">
          <li><a v-fit="93.600">Home</a></li>
          <li><a v-fit="123">Contact</a></li>
        </ul>
        <h1><span v-fit="770">CONTACT US!</span></h1>
        <p class="lead"><span v-fit="725">Contact the Coolest cats here on the website</span></p>
        <form class="form" @submit.prevent>
          <div v-for="f in fields" :key="f.label" class="field">
            <label><span v-fit="f.fit">{{ f.label }}</span></label>
            <div class="input" :class="{ focus: f.focus }"><span v-fit="f.vfit">{{ f.value }}</span><i v-if="f.focus" class="caret"></i></div>
          </div>
          <button type="submit"><span v-fit="69">submit</span></button>
        </form>
      </section>

      <footer class="shelf">
        <div v-for="(d, i) in downloads" :key="i" class="dl">
          <svg class="file" viewBox="0 0 34 34" v-html="fileIcon[d.icon]"></svg>
          <span class="dl-name"><span v-fit="d.fit">{{ d.text }}</span></span>
          <svg class="chev" viewBox="0 0 20 12"><path d="m1.500 11 8.500-9 8.500 9" fill="none" stroke="#6b6e72" stroke-width="2.800" /></svg>
        </div>
        <div class="show-all"><span v-fit="93">Show All</span></div>
        <svg class="close" viewBox="0 0 18 18"><path d="m1 1 16 16M17 1 1 17" stroke="#6b6e72" stroke-width="2.800" /></svg>
      </footer>
    </main>

    <div class="dock-area">
      <div class="dock">
        <div v-for="(g, gi) in dockGroups" :key="gi" class="group">
          <div v-for="a in g" :key="a" class="app">
            <svg viewBox="0 0 76 94"><g v-html="dock[a]"></g><circle v-if="running.has(a)" cx="38" cy="86" r="4" fill="#000" /></svg>
          </div>
        </div>
      </div>
    </div>
  </div>
</template>

<style>
body { overflow: hidden; }
</style>

<style scoped>
* { box-sizing: border-box; }
svg { display: block; flex: none; overflow: visible; }
span { white-space: nowrap; }
.desktop { width: 2880px; height: 1800px; display: flex; flex-direction: column; font-family: Inter, "Liberation Sans", sans-serif; background: linear-gradient(#26437c 0, #26437c 200px, #06121a 1600px); }

.menubar { height: 44px; flex: none; background: #b6cfee; display: flex; align-items: center; padding: 0 46px 0 42px; color: #011a33; font-size: 28px; }
.apple { width: 26px; height: 31px; margin-top: -2px; }
.menus { display: flex; gap: 36px; margin-left: 41px; }
.menu { flex: none; }
.menu:first-child { font-weight: 700; }
.status { display: flex; align-items: center; margin-left: auto; }
.s-avast { width: 32px; height: 32px; }
.s-bt { width: 24px; height: 32px; margin-left: 31px; }
.s-wifi { width: 42px; height: 30px; margin-left: 27px; }
.s-vol { width: 44px; height: 30px; margin-left: 19px; }
.pct { width: 49px; margin-left: 19px; font-size: 24px; }
.s-bat { width: 46px; height: 24px; margin-left: 9px; }
.clock { width: 157px; margin-left: 36px; }
.s-search { width: 30px; height: 28px; margin-left: 42px; }
.s-siri { width: 32px; height: 32px; margin-left: 34px; }
.s-list { width: 36px; height: 22px; margin-left: 24px; }

.window { height: 1642px; margin-top: 4px; flex: none; display: flex; flex-direction: column; background: #fff; border-radius: 10px; overflow: hidden; }
.tabstrip { height: 84px; flex: none; display: flex; background: #dee1e6; box-shadow: inset 0 2px #eef0f4; }
.lights { width: 158px; flex: none; display: flex; gap: 16px; padding: 31px 0 0 26px; }
.lights i { width: 24px; height: 24px; border-radius: 50%; }
.red { background: #fe5f57; border: 1px solid #e2463f; }
.amber { background: #febc3f; border: 1px solid #e0a033; }
.green { background: #2dca44; border: 1px solid #1fad35; }
.tabs { display: flex; padding-top: 31px; }
.tab { width: 58px; height: 40px; padding: 3px 0 0 12px; border-right: 2px solid #8e9195; }
.tab.tight { width: 56px; }
.tab.last { width: 54px; border: 0; }
.tab svg { width: 32px; height: 32px; }
.active { width: 64px; height: 68px; margin-top: 16px; flex: none; background: #fff; border-radius: 16px 16px 0 0; display: flex; align-items: center; justify-content: center; position: relative; }
.active::before, .active::after { content: ""; position: absolute; bottom: 0; width: 16px; height: 16px; }
.active::before { left: -16px; background: radial-gradient(circle at 0 0, transparent 15.5px, #fff 16px); }
.active::after { right: -16px; background: radial-gradient(circle at 100% 0, transparent 15.5px, #fff 16px); }
.active svg { width: 16px; height: 16px; }
.plus { width: 24px; height: 24px; margin: 38px 0 0 32px; }

.toolbar { height: 72px; flex: none; display: flex; align-items: center; padding: 0 40px 0 30px; }
.nav { width: 28px; height: 28px; }
.fwd { margin-left: 36px; }
.reload { width: 31px; height: 31px; margin-left: 35px; margin-right: 1px; }
.omnibox { width: 2294px; height: 56px; flex: none; margin-left: 27px; border-radius: 28px; background: #f1f3f4; display: flex; align-items: center; padding: 0 21px 0 22px; font-size: 28px; color: #202124; }
.info { width: 28px; height: 28px; margin-right: 18px; }
.dim { color: #6a6d71; }
.star { width: 30px; height: 30px; margin-left: auto; }
.ext { width: 32px; height: 32px; margin-left: 28px; }
.ext.two { margin-left: 32px; }
.tool-sep { width: 2px; height: 32px; margin-left: 28px; background: #cfd1d4; }
.queue { width: 32px; height: 26px; margin-left: 28px; }
.avatar { width: 44px; height: 44px; margin-left: 26px; }
.dots { width: 8px; height: 28px; margin-left: 38px; }

.bookmarks { height: 66px; flex: none; display: flex; align-items: center; gap: 32px; padding: 0 28px 8px; border-bottom: 2px solid #dadce0; font-size: 24px; line-height: 54px; color: #3c4043; }
.bm { display: flex; align-items: center; gap: 16px; }
.bm svg { width: 32px; height: 32px; }
.bm-slot { flex: none; display: block; }
.more { width: 14px; height: 12px; margin-left: auto; margin-right: -11px; }
.bm-sep { width: 2px; height: 32px; margin-right: -11px; background: #dadce0; }
.folder { width: 32px; height: 26px; margin-right: -16px; }
.other { width: 188px; }

.page { height: 1322px; flex: none; background: #89ceeb; color: #fff; font-family: Verdana, "DejaVu Sans", sans-serif; font-size: 32px; display: flex; flex-direction: column; align-items: center; }
.links { align-self: stretch; margin: 110px 0 0; padding: 0 0 0 122px; list-style: none; }
.links li { height: 38px; line-height: 38px; display: flex; align-items: center; gap: 24px; }
.links li::before { content: ""; width: 10px; height: 10px; margin-top: 4px; border-radius: 50%; background: #fff; }
.links a { color: #551a8b; text-decoration: underline; text-decoration-thickness: 2px; text-underline-offset: 2px; }
h1 { margin: 66px 0 0; font-size: 97px; line-height: 118px; font-weight: 700; word-spacing: 4px; }
.lead { margin: 59px 0 0; line-height: 40px; }
.form { width: 828px; margin: 108px 0 0 28px; display: flex; flex-direction: column; align-items: flex-start; }
.field { width: 828px; margin-bottom: 32px; }
label { display: block; height: 40px; line-height: 40px; padding-left: 10px; margin-bottom: 84px; }
.input { height: 54px; display: flex; align-items: center; padding: 1px 0 0 13px; background: #fff; border: 1px solid #eef0f1; box-shadow: inset 0 0 0 1px #bcbcbc, inset 0 0 0 2px #e9e9e9; color: #000; font-family: Inter, sans-serif; font-size: 22px; }
.input.focus { border-color: #3f86e0; box-shadow: 0 0 0 3px #3b91f0, 0 0 0 5px rgba(59, 145, 240, .45), inset 0 0 0 1px #6d9ee6, inset 0 0 0 3px #c3daf8; border-radius: 2px; }
.caret { width: 2px; height: 26px; background: #000; margin-left: 1px; }
button { width: 96px; height: 32px; margin: -10px 0 0 2px; padding: 0; border: 0; border-radius: 7px; background: #fff; box-shadow: 0 1px 2px rgba(0, 0, 0, .4); color: #222; font-family: Inter, sans-serif; font-size: 23px; line-height: 32px; text-align: center; }

.shelf { flex: 1; display: flex; align-items: center; border-top: 2px solid #dadce0; background: linear-gradient(#fff 40%, #f1f1f1); color: #3c4043; font-size: 24px; padding: 0 26px 0 0; }
.dl { width: 454px; height: 72px; flex: none; border-right: 2px solid #c9cacc; display: flex; align-items: center; }
.dl:first-child { width: 461px; padding-left: 8px; }
.file { width: 34px; height: 34px; margin: -6px 0 0 32px; }
.dl-name { width: 306px; margin-left: 25px; padding-top: 6px; }
.dl:first-child .file { margin-left: 30px; }
.dl:first-child .dl-name { margin-left: 25px; width: 307px; }
.chev { width: 20px; height: 12px; }
.show-all { width: 158px; height: 64px; margin-left: auto; margin-top: -4px; border: 2px solid #dadce0; border-radius: 8px; display: flex; align-items: center; justify-content: center; }
.close { width: 18px; height: 18px; margin: -4px 1px 0 27px; }

.dock-area { flex: 1; display: flex; justify-content: flex-start; align-items: flex-end; padding-left: 58px; background: linear-gradient(90deg, #08141c, #0a1a1f 30%, #07121a 55%, #0b1f38 66%, #0a1826 78%, #05090f); }
.dock { width: 2764px; height: 94px; display: flex; gap: 34px; padding-left: 6px; border-radius: 12px 12px 0 0; background: linear-gradient(90deg, #4a585b, #4b575a 40%, #4b5a60 60%, #4a5a66 72%, #4a5058 90%, #4b4f54); }
.group { display: flex; position: relative; }
.group + .group::before { content: ""; position: absolute; left: -16px; top: 12px; width: 2px; height: 70px; background: #1b2a30; }
.app { width: 76.6px; }
.app svg { width: 76.6px; height: 94px; }
</style>
